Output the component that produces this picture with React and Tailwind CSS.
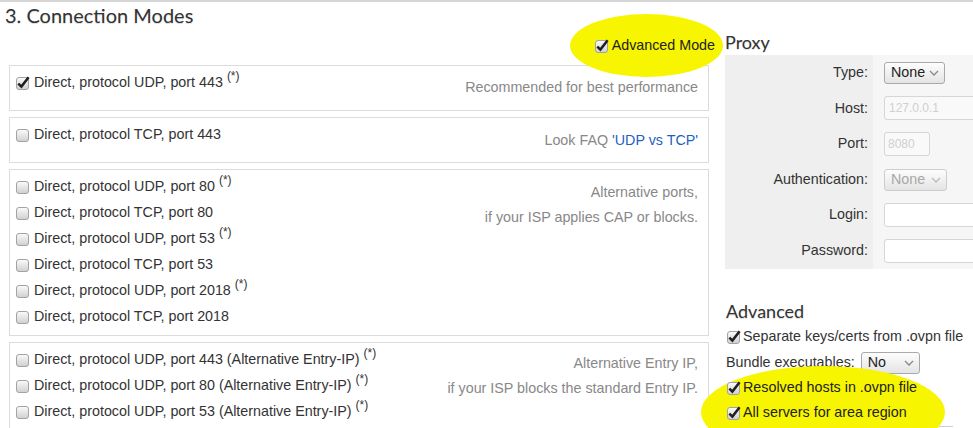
import React from 'react'

const Check = ({ checked }) => (
  <svg width="14" height="14" viewBox="0 0 14 14" className="shrink-0">
    <defs>
      <linearGradient id="cbg" x1="0" y1="0" x2="0" y2="1">
        <stop offset="0" stopColor="#fbfbfb" />
        <stop offset="1" stopColor="#cfcfcf" />
      </linearGradient>
    </defs>
    <rect x="0.5" y="1.5" width="12" height="12" rx="2.5" fill="url(#cbg)" stroke="#a3a3a3" />
    {checked && (
      <path d="M2.3 7.6 L5.4 10.6 L12.6 1.2" fill="none" stroke="#1e1e1e" strokeWidth="2.5" />
    )}
  </svg>
)

const Chevron = ({ color = '#888' }) => (
  <svg width="10" height="6" viewBox="0 0 10 6">
    <path d="M1 1 L5 5 L9 1" fill="none" stroke={color} strokeWidth="1.3" />
  </svg>
)

const Select = ({ value, width, disabled }) => (
  <div
    className={`flex items-center justify-between h-[22px] pl-[6px] pr-[5px] rounded-[3px] border bg-gradient-to-b from-[#fdfdfd] to-[#e4e4e4] ${
      disabled ? 'border-[#cdcdcd] text-[#a8a8a8]' : 'border-[#a9a9a9] text-[#222]'
    } ${width}`}
  >
    <span>{value}</span>
    <Chevron color={disabled ? '#bbb' : '#888'} />
  </div>
)

const Option = ({ label, checked, star }) => (
  <div className="flex items-center gap-[4px] h-[26px]">
    <Check checked={checked} />
    <span>
      {label}
      {star && <sup className="text-[12px] ml-[4px] -top-[0.6em]">(*)</sup>}
    </span>
  </div>
)

const groups = [
  {
    h: 'h-[46px]',
    rows: [{ label: 'Direct, protocol UDP, port 443', checked: true, star: true }],
    note: ['Recommended for best performance'],
    pt: 'pt-[9px]',
  },
  {
    h: 'h-[46px]',
    rows: [{ label: 'Direct, protocol TCP, port 443' }],
    note: null,
    pt: 'pt-[10px]',
  },
  {
    h: 'h-[167px]',
    rows: [
      { label: 'Direct, protocol UDP, port 80', star: true },
      { label: 'Direct, protocol TCP, port 80' },
      { label: 'Direct, protocol UDP, port 53', star: true },
      { label: 'Direct, protocol TCP, port 53' },
      { label: 'Direct, protocol UDP, port 2018', star: true },
      { label: 'Direct, protocol TCP, port 2018' },
    ],
    note: ['Alternative ports,', 'if your ISP applies CAP or blocks.'],
    pt: 'pt-[10px]',
  },
  {
    h: 'h-[120px]',
    rows: [
      { label: 'Direct, protocol UDP, port 443 (Alternative Entry-IP)', star: true },
      { label: 'Direct, protocol UDP, port 80 (Alternative Entry-IP)', star: true },
      { label: 'Direct, protocol UDP, port 53 (Alternative Entry-IP)', star: true },
    ],
    note: ['Alternative Entry IP,', 'if your ISP blocks the standard Entry IP.'],
    pt: 'pt-[8px]',
  },
]

const proxyRows = [
  { label: 'Type:', field: <Select value="None" width="w-[61px]" /> },
  {
    label: 'Host:',
    field: (
      <div className="h-[24px] w-[110px] shrink-0 border border-[#d6d6d6] rounded-l-[3px] bg-[#f9f9f9] text-[12px] text-[#d0d0d0] pl-[4px] leading-[22px]">
        127.0.0.1
      </div>
    ),
  },
  {
    label: 'Port:',
    field: (
      <div className="h-[24px] w-[46px] border border-[#d6d6d6] rounded-[3px] bg-[#f9f9f9] text-[12px] text-[#d0d0d0] pl-[3px] leading-[22px]">
        8080
      </div>
    ),
  },
  { label: 'Authentication:', field: <Select value="None" width="w-[63px]" disabled /> },
  {
    label: 'Login:',
    field: <div className="h-[24px] w-[110px] shrink-0 border border-[#d6d6d6] rounded-l-[3px] bg-white" />,
  },
  {
    label: 'Password:',
    field: <div className="h-[24px] w-[110px] shrink-0 border border-[#d6d6d6] rounded-l-[3px] bg-white" />,
  },
]

export default function App() {
  return (
    <div className="relative w-[973px] h-[428px] overflow-hidden bg-white border-t-2 border-[#d6d6d6] text-[14.3px] text-[#333] font-['Liberation_Sans',Arial,sans-serif]">
      {/* highlight marks */}
      <div className="absolute left-[570px] top-[12px] w-[153px] h-[63px] rounded-[50%] bg-[#f8f500] z-10" />
      <div className="absolute left-[701px] top-[364px] w-[244px] h-[92px] rounded-[50%] bg-[#f8f500] z-10" />

      <div className="flex">
        {/* left column */}
        <div className="w-[725px] shrink-0">
          <h2 className="pl-[5px] h-[28px] leading-[26px] text-[20px] text-[#333] font-['Lato',sans-serif] [text-shadow:0_1px_1px_rgba(0,0,0,0.15)]">
            3. Connection Modes
          </h2>
          <div className="h-[32px] flex items-center justify-end pr-[10px]">
            <div className="relative z-20 flex items-center gap-[3px] text-[#222]">
              <Check checked />
              <span>Advanced Mode</span>
            </div>
          </div>
          <div className="pt-[3px] ml-[9px] w-[700px] flex flex-col gap-[6px]">
            {groups.map((g, i) => (
              <div key={i} className={`flex justify-between border border-[#dcdcdc] pl-[6px] pr-[10px] ${g.h}`}>
                <div className="pt-[4px]">
                  {g.rows.map((r) => (
                    <Option key={r.label} {...r} />
                  ))}
                </div>
                <div className={`${g.pt} text-right text-[#888] leading-[25px]`}>
                  {g.note
                    ? g.note.map((n) => <div key={n}>{n}</div>)
                    : (
                      <div>
                        Look FAQ <span className="text-[#1f5fbf]">'UDP vs TCP'</span>
                      </div>
                    )}
                </div>
              </div>
            ))}
          </div>
        </div>

        {/* right column */}
        <div className="w-[248px] shrink-0 pt-[27px]">
          <h3 className="h-[26px] leading-[26px] text-[18px] text-[#333] font-['Lato',sans-serif] [text-shadow:0_1px_1px_rgba(0,0,0,0.15)]">
            Proxy
          </h3>
          <div className="grid grid-cols-[148px_100px]">
            {proxyRows.map((r) => (
              <React.Fragment key={r.label}>
                <div className="h-[35.6px] flex items-center justify-end pr-[5px] bg-[#efefef]">
                  {r.label}
                </div>
                <div className="h-[35.6px] flex items-center pl-[11px] bg-[#f6f6f6] overflow-hidden">
                  {r.field}
                </div>
              </React.Fragment>
            ))}
          </div>

          <h3 className="mt-[29px] h-[26px] leading-[26px] pl-[1px] text-[18px] text-[#333] font-['Lato',sans-serif] [text-shadow:0_1px_1px_rgba(0,0,0,0.15)]">
            Advanced
          </h3>
          <div className="pl-[2px]">
            <div className="flex items-center gap-[2px] h-[26px]">
              <Check checked />
              <span>Separate keys/certs from .ovpn file</span>
            </div>
            <div className="flex items-center gap-[6px] h-[26px] -ml-[1px]">
              <span>Bundle executables:</span>
              <Select value="No" width="w-[59px]" />
            </div>
            <div className="relative z-20 flex items-center gap-[2px] h-[24px] text-[#222]">
              <Check checked />
              <span>Resolved hosts in .ovpn file</span>
            </div>
            <div className="relative z-20 flex items-center gap-[2px] h-[26px] text-[#222]">
              <Check checked />
              <span>All servers for area region</span>
            </div>
            <div className="ml-[106px] w-[120px] h-[6px] border-t border-l border-[#cfcfcf] rounded-tl-[3px]" />
          </div>
        </div>
      </div>
    </div>
  )
}
